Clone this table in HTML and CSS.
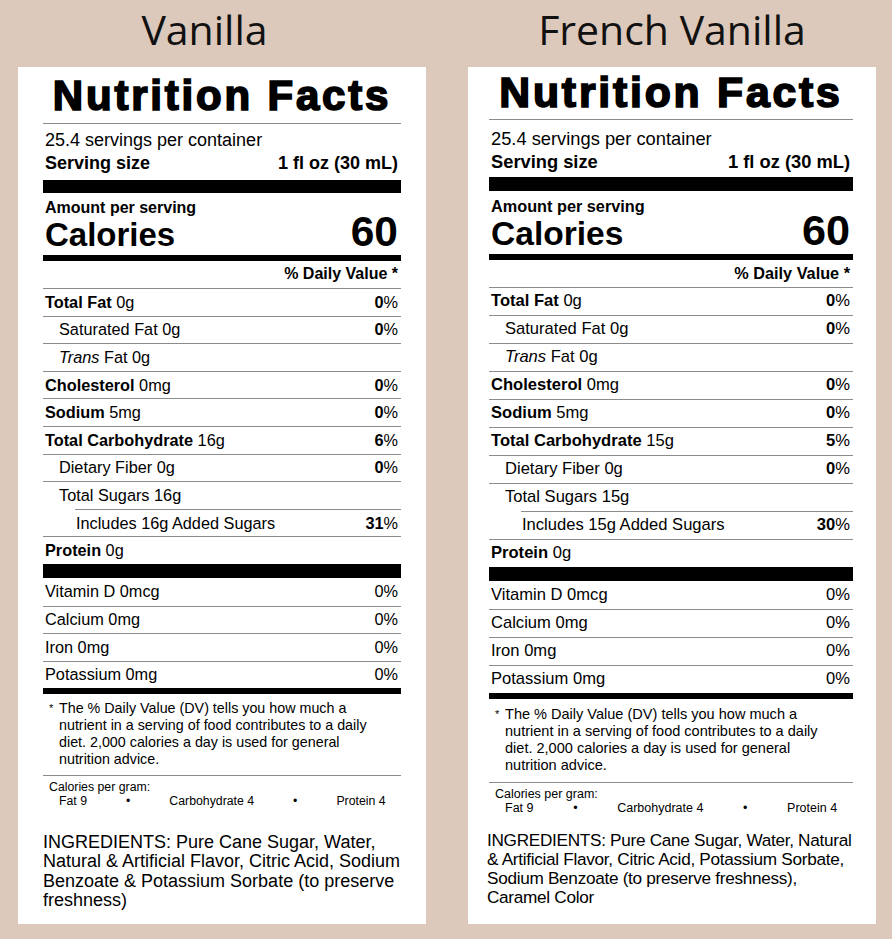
FILE: index.html
```html
<!DOCTYPE html>
<html lang="en">
<head>
<meta charset="utf-8">
<title>Vanilla and French Vanilla Nutrition Facts</title>
<link rel="stylesheet" href="styles.css">
</head>
<body>
<main class="page">
  <section class="column">
    <h1 class="flavor flavor--offset">Vanilla</h1>
    <article class="label label--vanilla">
      <h2 class="label__title">Nutrition Facts</h2>
      <p class="servings">25.4 servings per container</p>
      <p class="size"><span>Serving size</span><span>1 fl oz (30 mL)</span></p>
      <div class="bar bar--top"></div>
      <p class="amount">Amount per serving</p>
      <p class="calories"><span class="calories__label">Calories</span><span class="calories__value">60</span></p>
      <div class="bar bar--cal"></div>
      <p class="dv-head">% Daily Value *</p>
      <ul class="nutrients">
        <li class="row"><span><b>Total Fat</b> 0g</span><span><b>0</b>%</span></li>
        <li class="row row--sub"><span>Saturated Fat 0g</span><span><b>0</b>%</span></li>
        <li class="row row--sub"><span><i>Trans</i> Fat 0g</span></li>
        <li class="row"><span><b>Cholesterol</b> 0mg</span><span><b>0</b>%</span></li>
        <li class="row"><span><b>Sodium</b> 5mg</span><span><b>0</b>%</span></li>
        <li class="row"><span><b>Total Carbohydrate</b> 16g</span><span><b>6</b>%</span></li>
        <li class="row row--sub"><span>Dietary Fiber 0g</span><span><b>0</b>%</span></li>
        <li class="row row--sub"><span>Total Sugars 16g</span></li>
        <li class="row row--added"><span>Includes 16g Added Sugars</span><span><b>31</b>%</span></li>
        <li class="row"><span><b>Protein</b> 0g</span></li>
      </ul>
      <div class="bar bar--thick"></div>
      <ul class="vitamins">
        <li class="row"><span>Vitamin D 0mcg</span><span>0%</span></li>
        <li class="row"><span>Calcium 0mg</span><span>0%</span></li>
        <li class="row"><span>Iron 0mg</span><span>0%</span></li>
        <li class="row"><span>Potassium 0mg</span><span>0%</span></li>
      </ul>
      <div class="bar bar--cal bar--flush"></div>
      <p class="footnote"><span class="footnote__star">*</span><span>The % Daily Value (DV) tells you how much a<br>nutrient in a serving of food contributes to a daily<br>diet. 2,000 calories a day is used for general<br>nutrition advice.</span></p>
      <div class="per-gram">
        <p class="per-gram__title">Calories per gram:</p>
        <p class="per-gram__list"><span>Fat 9</span><span>•</span><span>Carbohydrate 4</span><span>•</span><span>Protein 4</span></p>
      </div>
      <p class="ingredients">INGREDIENTS: Pure Cane Sugar, Water,<br>Natural &amp; Artificial Flavor, Citric Acid, Sodium<br>Benzoate &amp; Potassium Sorbate (to preserve<br>freshness)</p>
    </article>
  </section>

  <section class="column">
    <h1 class="flavor">French Vanilla</h1>
    <article class="label label--french">
      <h2 class="label__title">Nutrition Facts</h2>
      <p class="servings">25.4 servings per container</p>
      <p class="size"><span>Serving size</span><span>1 fl oz (30 mL)</span></p>
      <div class="bar bar--top"></div>
      <p class="amount">Amount per serving</p>
      <p class="calories"><span class="calories__label">Calories</span><span class="calories__value">60</span></p>
      <div class="bar bar--cal"></div>
      <p class="dv-head">% Daily Value *</p>
      <ul class="nutrients">
        <li class="row"><span><b>Total Fat</b> 0g</span><span><b>0</b>%</span></li>
        <li class="row row--sub"><span>Saturated Fat 0g</span><span><b>0</b>%</span></li>
        <li class="row row--sub"><span><i>Trans</i> Fat 0g</span></li>
        <li class="row"><span><b>Cholesterol</b> 0mg</span><span><b>0</b>%</span></li>
        <li class="row"><span><b>Sodium</b> 5mg</span><span><b>0</b>%</span></li>
        <li class="row"><span><b>Total Carbohydrate</b> 15g</span><span><b>5</b>%</span></li>
        <li class="row row--sub"><span>Dietary Fiber 0g</span><span><b>0</b>%</span></li>
        <li class="row row--sub"><span>Total Sugars 15g</span></li>
        <li class="row row--added"><span>Includes 15g Added Sugars</span><span><b>30</b>%</span></li>
        <li class="row"><span><b>Protein</b> 0g</span></li>
      </ul>
      <div class="bar bar--thick"></div>
      <ul class="vitamins">
        <li class="row"><span>Vitamin D 0mcg</span><span>0%</span></li>
        <li class="row"><span>Calcium 0mg</span><span>0%</span></li>
        <li class="row"><span>Iron 0mg</span><span>0%</span></li>
        <li class="row"><span>Potassium 0mg</span><span>0%</span></li>
      </ul>
      <div class="bar bar--cal bar--flush"></div>
      <p class="footnote"><span class="footnote__star">*</span><span>The % Daily Value (DV) tells you how much a<br>nutrient in a serving of food contributes to a daily<br>diet. 2,000 calories a day is used for general<br>nutrition advice.</span></p>
      <div class="per-gram">
        <p class="per-gram__title">Calories per gram:</p>
        <p class="per-gram__list"><span>Fat 9</span><span>•</span><span>Carbohydrate 4</span><span>•</span><span>Protein 4</span></p>
      </div>
      <p class="ingredients">INGREDIENTS: Pure Cane Sugar, Water, Natural<br>&amp; Artificial Flavor, Citric Acid, Potassium Sorbate,<br>Sodium Benzoate (to preserve freshness),<br>Caramel Color</p>
    </article>
  </section>
</main>
</body>
</html>
```
FILE: styles.css
```css
* {
  box-sizing: border-box;
  margin: 0;
  padding: 0;
}

html, body {
  width: 892px;
  height: 939px;
  overflow: hidden;
}

body {
  background: #ddc9bb;
  font-family: "Liberation Sans", Arial, sans-serif;
  color: #000;
}

b { font-weight: 700; }

ul { list-style: none; }

.page {
  display: flex;
  gap: 42px;
  padding-left: 18px;
}

.column {
  width: 408px;
  display: flex;
  flex-direction: column;
}

.flavor {
  height: 67px;
  padding-top: 0;
  font-family: "Open Sans", sans-serif;
  font-weight: 400;
  font-size: 41px;
  line-height: 58px;
  text-align: center;
  color: #111;
  white-space: nowrap;
}

.flavor--offset {
  padding-right: 35px;
}

/* ---------- label ---------- */

.label {
  --rule: #8c8c8c;
  background: #fff;
  height: 857px;
  padding: 0 var(--pr) 0 var(--pl);
}

.label--vanilla {
  --k: 1;
  --pl: 25px;
  --pr: 25px;
  --title-pt: 7.5px;
  --title-pb: 6.5px;
  --head-pt: 5.3px;
  --bar-top-mt: 4.7px;
  --bar-top: 13.5px;
  --row: 27.6px;
  --foot-pt: 6px;
  --foot-pb: 6.5px;
  --ing-fs: 18px;
  --ing-lh: 19.4px;
  --ing-mt: 25px;
  --ing-ml: 0px;
  --ing-ls: 0px;
}

.label--french {
  --k: 1.017;
  --pl: 21px;
  --pr: 23px;
  --title-pt: 3.8px;
  --title-pb: 5.2px;
  --head-pt: 7.2px;
  --bar-top-mt: 3.8px;
  --bar-top: 14.5px;
  --row: 28px;
  --foot-pt: 7.5px;
  --foot-pb: 7.5px;
  --ing-fs: 17.2px;
  --ing-lh: 19px;
  --ing-mt: 16px;
  --ing-ml: -2px;
  --ing-ls: -0.3px;
}

.label__title {
  font-family: "Liberation Sans", Arial, sans-serif;
  font-weight: 700;
  font-size: calc(42px * var(--k));
  line-height: 1;
  letter-spacing: 2.8px;
  -webkit-text-stroke: 1.7px #000;
  text-align: center;
  padding: var(--title-pt) 0 var(--title-pb);
  border-bottom: 1px solid var(--rule);
}

.servings {
  font-size: calc(18px * var(--k));
  line-height: 23px;
  padding: var(--head-pt) 0 0 2px;
}

.size {
  display: flex;
  justify-content: space-between;
  font-size: calc(18px * var(--k));
  font-weight: 700;
  line-height: 23px;
  padding: 0 3px 0 2px;
}

.bar {
  background: #000;
}

.bar--top {
  height: var(--bar-top);
  margin-top: var(--bar-top-mt);
}

.bar--cal {
  height: 6px;
  margin-top: 5px;
}

.bar--flush {
  margin-top: 0;
}

.bar--thick {
  height: 14px;
}

.amount {
  font-size: calc(16px * var(--k));
  font-weight: 700;
  line-height: 18px;
  margin-top: 5.5px;
  padding-left: 2px;
}

.calories {
  display: flex;
  justify-content: space-between;
  align-items: baseline;
  font-weight: 700;
  line-height: 30px;
  padding: 0 3px 0 2px;
}

.calories__label {
  font-size: calc(33px * var(--k));
}

.calories__value {
  font-size: calc(42.5px * var(--k));
}

.dv-head {
  text-align: right;
  font-size: calc(16px * var(--k));
  font-weight: 700;
  line-height: 18px;
  margin: 4.4px 0 4.6px;
  padding-right: 3px;
}

.row {
  display: flex;
  justify-content: space-between;
  align-items: center;
  height: var(--row);
  border-top: 1px solid var(--rule);
  padding: 0 3px 0 2px;
  font-size: calc(16.3px * var(--k));
}

.row--sub {
  padding-left: 16px;
}

.row--added {
  margin-left: 32px;
  padding-left: 1px;
}

.vitamins .row:first-child {
  border-top: 0;
}

.footnote {
  display: flex;
  font-size: calc(14.3px * var(--k));
  line-height: 17px;
  padding: var(--foot-pt) 0 var(--foot-pb) 6px;
  border-bottom: 1px solid var(--rule);
}

.footnote__star {
  width: 10px;
  flex: none;
  font-size: 11px;
}

.per-gram {
  font-size: calc(12.3px * var(--k));
  line-height: 14px;
  padding-top: 4px;
}

.per-gram__title {
  padding-left: 6px;
}

.per-gram__list {
  display: flex;
  gap: calc(39px * var(--k));
  padding-left: 16px;
}

.ingredients {
  font-size: var(--ing-fs);
  line-height: var(--ing-lh);
  margin: var(--ing-mt) 0 0 var(--ing-ml);
  letter-spacing: var(--ing-ls);
  white-space: nowrap;
}
```
